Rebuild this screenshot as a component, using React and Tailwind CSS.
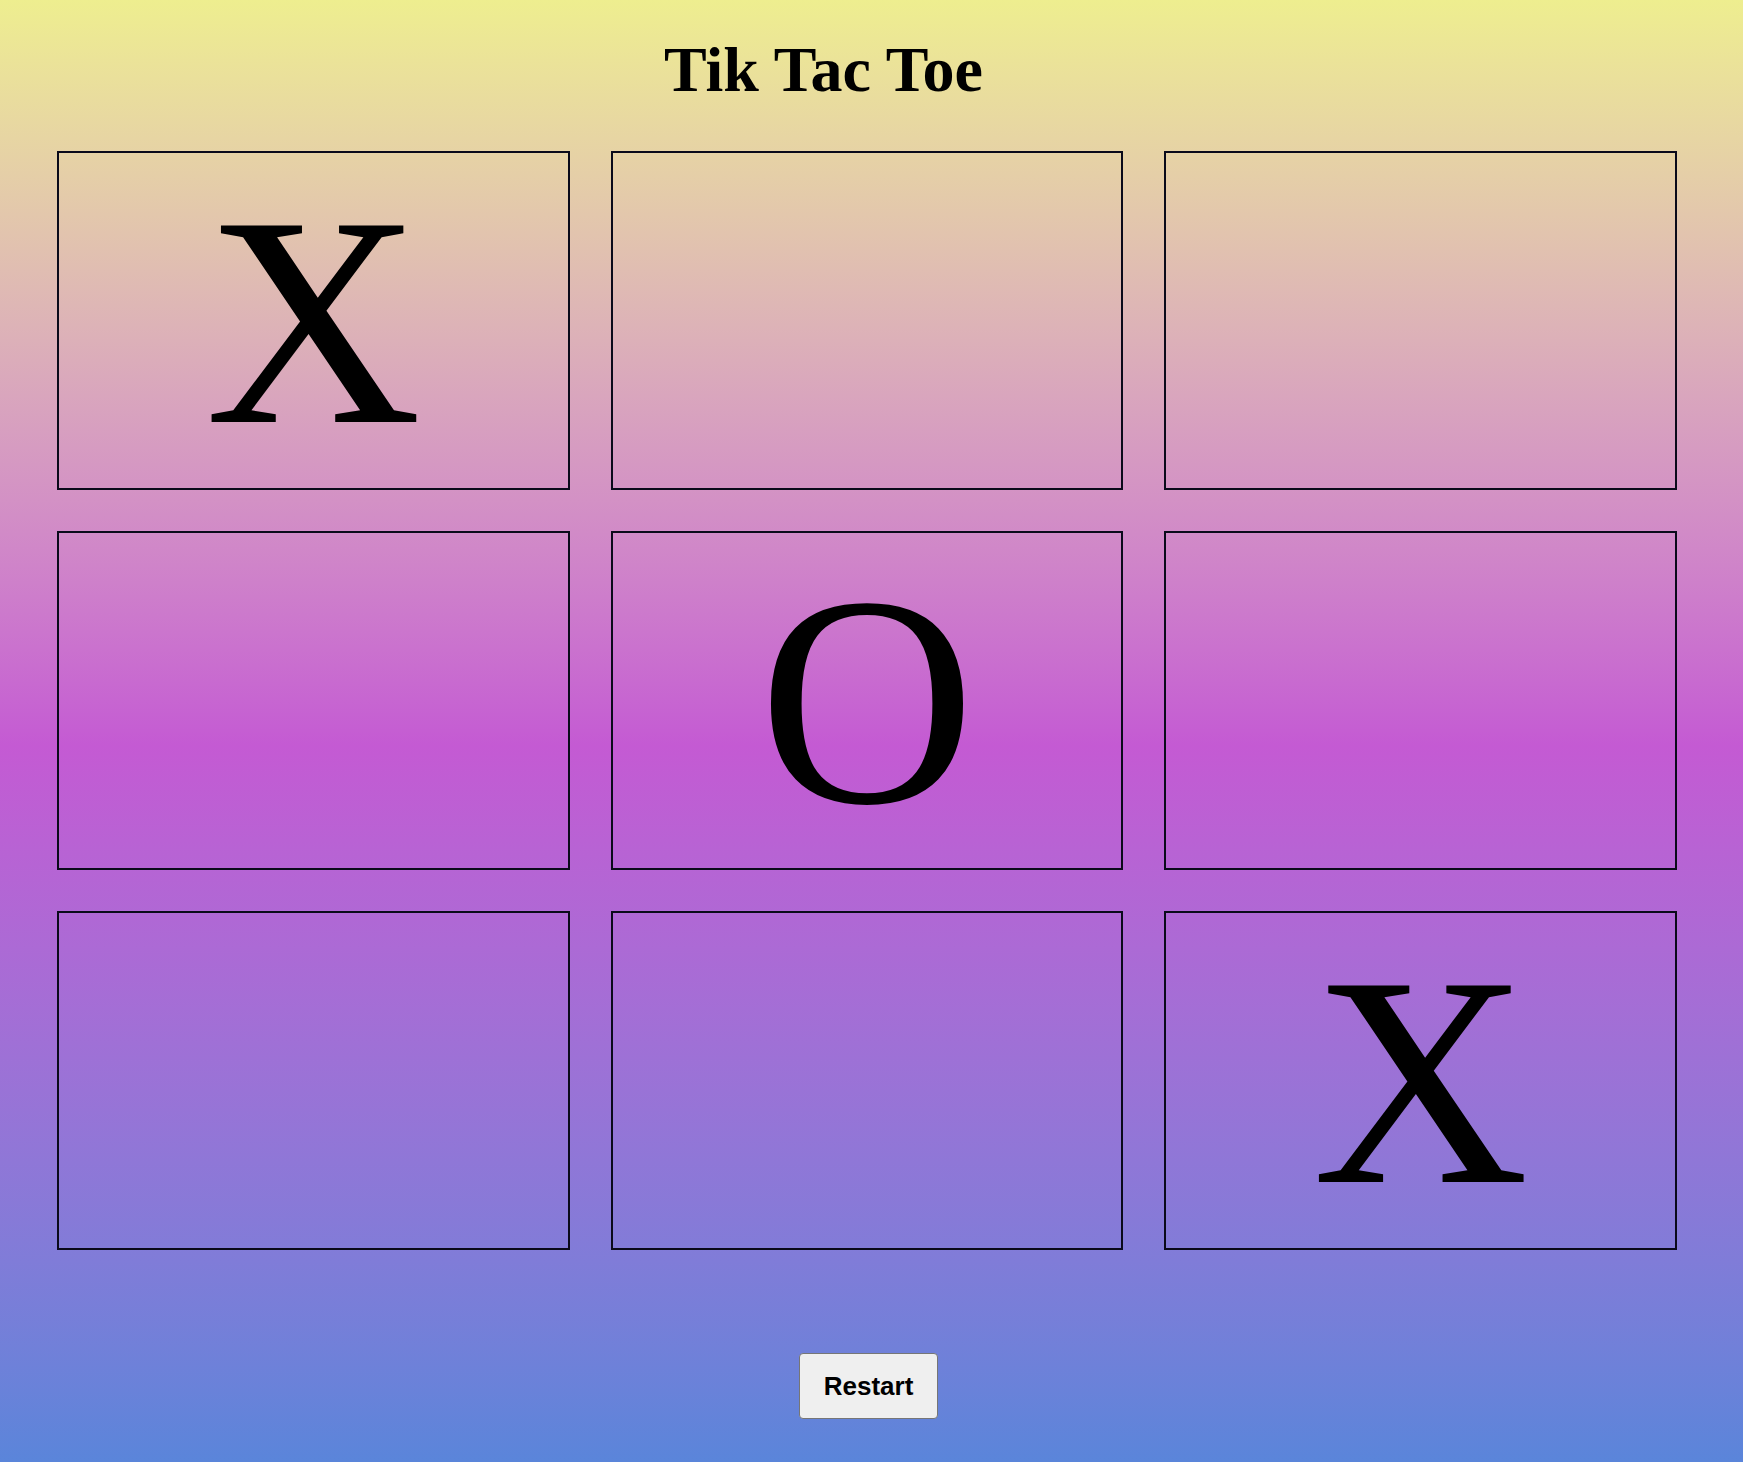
import React, { useState } from 'react';

const START = ['X', '', '', '', 'O', '', '', '', 'X'];

export default function App() {
  const [board, setBoard] = useState(START);
  const [turn, setTurn] = useState('O');

  const play = (i) => {
    if (board[i]) return;
    const next = [...board];
    next[i] = turn;
    setBoard(next);
    setTurn(turn === 'X' ? 'O' : 'X');
  };

  const restart = () => {
    setBoard(Array(9).fill(''));
    setTurn('X');
  };

  return (
    <div className="min-h-screen bg-linear-to-b from-[#eeee8f] via-[#c45ad3] via-51% to-[#5a85da] font-['Liberation_Serif','Times_New_Roman',serif] text-black">
      <h1 className="pt-[38px] pr-[96px] text-center text-[64px] font-bold leading-none">
        Tik Tac Toe
      </h1>

      {/* board */}
      <div className="mt-[49px] ml-[57px] mr-[66px] grid grid-cols-3 gap-x-[41px] gap-y-[41px]">
        {board.map((v, i) => (
          <div
            key={i}
            onClick={() => play(i)}
            className="flex h-[339px] cursor-pointer items-center justify-center border-2 border-[#0a0a1a] text-[300px] leading-none"
          >
            {v}
          </div>
        ))}
      </div>

      <div className="flex justify-center pt-[103px] pl-[57px] pr-[63px]">
        <button
          onClick={restart}
          className="h-[66px] w-[139px] rounded-[4px] border border-[#767676] bg-[#efefef] font-['Liberation_Sans',Arial,sans-serif] text-[26px] font-bold text-black"
        >
          Restart
        </button>
      </div>
    </div>
  );
}
